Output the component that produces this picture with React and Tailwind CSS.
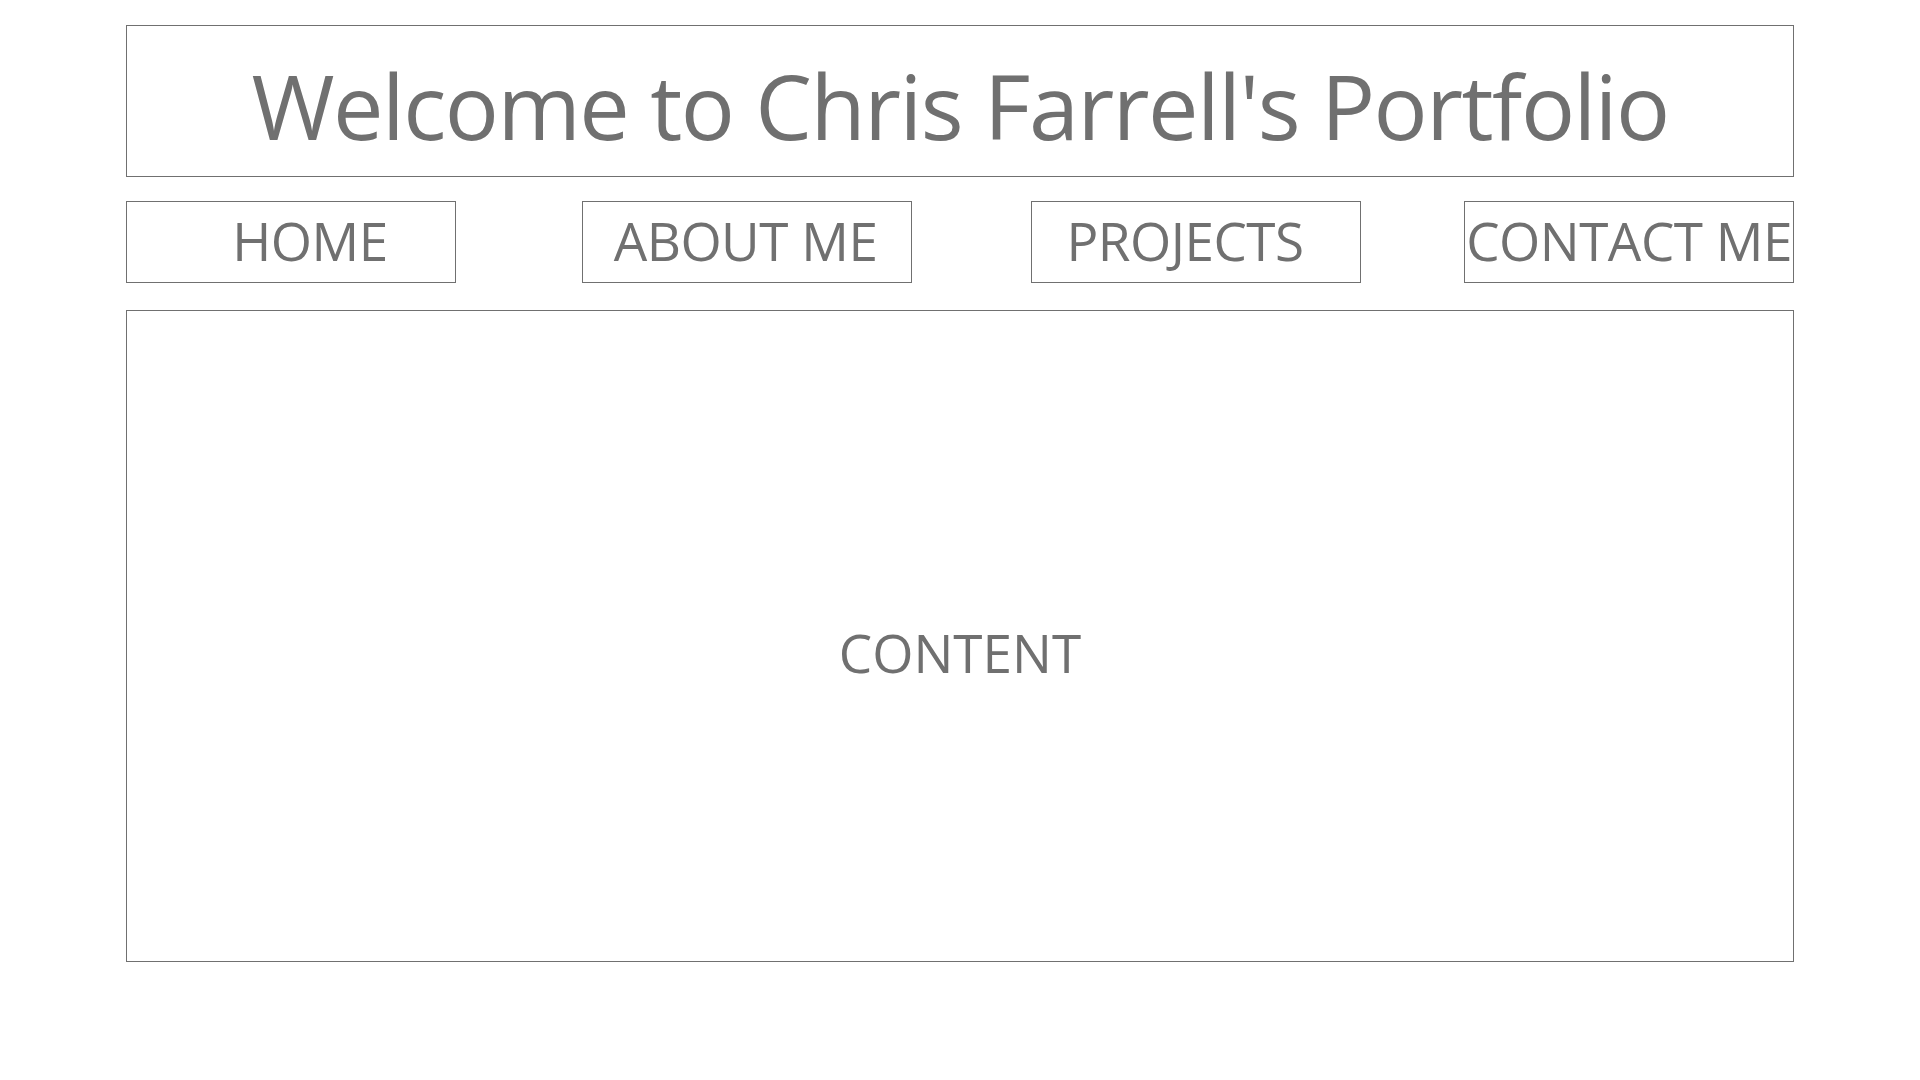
const navItems = [
  { label: 'HOME', box: 'ml-0', pad: 'pl-[38px]' },
  { label: 'ABOUT ME', box: 'ml-[126px]', pad: 'pr-[3px]' },
  { label: 'PROJECTS', box: 'ml-[119px]', pad: 'pr-[22px]' },
  { label: 'CONTACT ME', box: 'ml-[103px]', pad: '' },
]

function NavBox({ label, box, pad }) {
  return (
    <a
      href="#"
      className={`${box} ${pad} flex h-[82px] w-[330px] shrink-0 items-center justify-center overflow-hidden whitespace-nowrap border border-[#707070] pb-[4px] text-[53px] leading-none tracking-[-0.5px] text-[#707070]`}
    >
      {label}
    </a>
  )
}

export default function App() {
  return (
    <div
      className="min-h-screen bg-white px-[126px] pt-[25px] text-[#707070]"
      style={{ fontFamily: '"Open Sans", "Noto Sans", sans-serif' }}
    >
      <header className="flex h-[152px] items-center justify-center border border-[#707070] pt-[8px]">
        <h1 className="text-[90px] font-normal leading-none tracking-[-1.5px]">
          Welcome to Chris Farrell's Portfolio
        </h1>
      </header>

      <nav className="mt-[24px] flex">
        {navItems.map((item) => (
          <NavBox key={item.label} {...item} />
        ))}
      </nav>

      <main className="mt-[27px] flex h-[652px] items-center justify-center border border-[#707070] pt-[32px]">
        <p className="text-[53px] leading-none">CONTENT</p>
      </main>
    </div>
  )
}
